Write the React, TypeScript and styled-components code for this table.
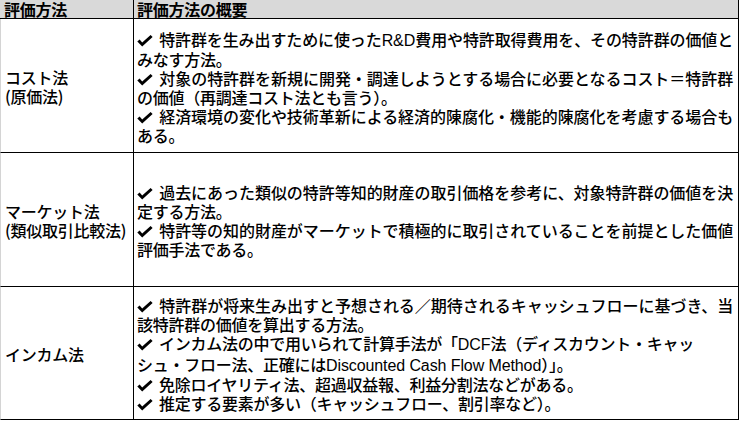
import React from "react";
import styled, { createGlobalStyle } from "styled-components";

const GlobalStyle = createGlobalStyle`
  html, body { margin: 0; padding: 0; background: #ffffff; }
  body {
    font-family: "Noto Sans CJK JP", "Noto Sans", sans-serif;
    color: #000000;
  }
`;

const Table = styled.div`
  display: grid;
  grid-template-columns: 134px 605px;
  grid-template-rows: 19px 134px 134px 133px;
  width: 740px;
  font-size: 16px;
  letter-spacing: -0.25px;
`;

const Cell = styled.div<{ $head?: boolean; $left?: boolean }>`
  box-sizing: border-box;
  display: flex;
  flex-direction: column;
  justify-content: center;
  background: ${(p) => (p.$head ? "#d9d9d9" : "#ffffff")};
  border-left: ${(p) => (p.$left && !p.$head ? "1px solid #d4d4d4" : "none")};
  border-right: 1px solid #000000;
  border-bottom: 1px solid #000000;
  padding: ${(p) =>
    p.$head ? (p.$left ? "0 0 0 4px" : "0 0 0 3px") : p.$left ? "3px 0 0 4px" : "3px 5px 0 3px"};
  font-weight: ${(p) => (p.$head ? 700 : 500)};
  line-height: ${(p) => (p.$head ? "19px" : "18.8px")};
  white-space: nowrap;
  min-width: 0;
`;

const Line = styled.div<{ $justify?: boolean }>`
  white-space: nowrap;
  text-align: ${(p) => (p.$justify ? "justify" : "left")};
  text-align-last: ${(p) => (p.$justify ? "justify" : "left")};
`;

const CheckBox = styled.span`
  display: inline-block;
  width: 22px;
  height: 12px;
  vertical-align: -1px;
`;

const Latin = styled.span`
  font-family: "Liberation Sans", "DejaVu Sans", sans-serif;
  font-size: 16px;
  font-weight: 400;
  letter-spacing: -0.1px;
`;

function Check() {
  return (
    <CheckBox>
      <svg width="16" height="12" viewBox="0 0 16 12">
        <path d="M0.3 6.6 L2.6 4.6 L5.2 7.4 L13.6 0 L15.6 1.9 L5.2 11.6 Z" fill="#000" />
      </svg>
    </CheckBox>
  );
}

type L = { t: string; j?: boolean };

const rows: { label: string[]; lines: L[] }[] = [
  {
    label: ["コスト法", "(原価法)"],
    lines: [
      { t: "✔特許群を生み出すために使ったR&D費用や特許取得費用を、その特許群の価値と", j: true },
      { t: "みなす方法。" },
      { t: "✔対象の特許群を新規に開発・調達しようとする場合に必要となるコスト＝特許群", j: true },
      { t: "の価値（再調達コスト法とも言う）。" },
      { t: "✔経済環境の変化や技術革新による経済的陳腐化・機能的陳腐化を考慮する場合も", j: true },
      { t: "ある。" },
    ],
  },
  {
    label: ["マーケット法", "(類似取引比較法)"],
    lines: [
      { t: "✔過去にあった類似の特許等知的財産の取引価格を参考に、対象特許群の価値を決", j: true },
      { t: "定する方法。" },
      { t: "✔特許等の知的財産がマーケットで積極的に取引されていることを前提とした価値", j: true },
      { t: "評価手法である。" },
    ],
  },
  {
    label: ["インカム法"],
    lines: [
      { t: "✔特許群が将来生み出すと予想される／期待されるキャッシュフローに基づき、当", j: true },
      { t: "該特許群の価値を算出する方法。" },
      { t: "✔インカム法の中で用いられて計算手法が「DCF法（ディスカウント・キャッ" },
      { t: "シュ・フロー法、正確にはDiscounted Cash Flow Method）」。" },
      { t: "✔免除ロイヤリティ法、超過収益報、利益分割法などがある。" },
      { t: "✔推定する要素が多い（キャッシュフロー、割引率など）。" },
    ],
  },
];

function renderText(t: string) {
  const parts = t.split(/(✔|[A-Za-z&0-9 ]+)/).filter((s) => s.length > 0);
  return parts.map((s, i) => {
    if (s === "✔") return <Check key={i} />;
    if (/^[A-Za-z&0-9 ]+$/.test(s)) return <Latin key={i}>{s}</Latin>;
    return <React.Fragment key={i}>{s}</React.Fragment>;
  });
}

export default function App() {
  return (
    <>
      <GlobalStyle />
      <Table>
        <Cell $head $left>評価方法</Cell>
        <Cell $head>評価方法の概要</Cell>
        {rows.map((r, ri) => (
          <React.Fragment key={ri}>
            <Cell $left>
              {r.label.map((l, i) => (
                <Line key={i}>{l}</Line>
              ))}
            </Cell>
            <Cell>
              {r.lines.map((l, i) => (
                <Line key={i} $justify={l.j}>
                  {renderText(l.t)}
                </Line>
              ))}
            </Cell>
          </React.Fragment>
        ))}
      </Table>
    </>
  );
}
